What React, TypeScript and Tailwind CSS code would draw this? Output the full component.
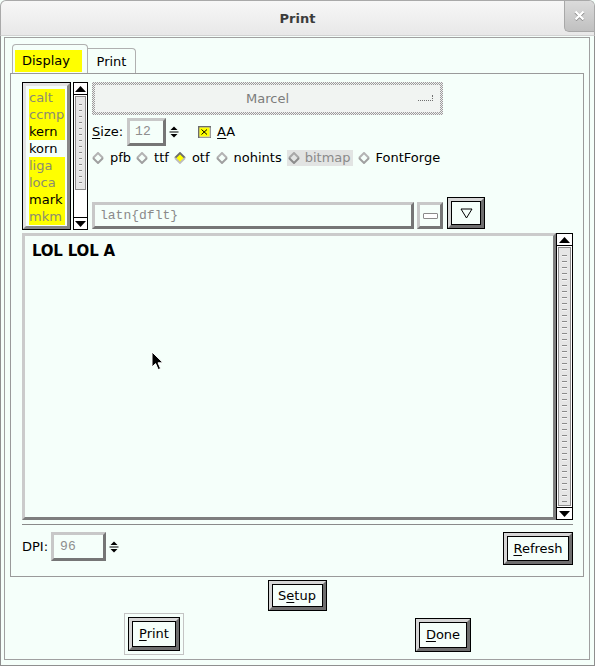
import React from "react";

function Btn({ className, children }: { className: string; children: React.ReactNode }) {
  return (
    <div className={`border border-black bg-[#f5fffa] ${className}`}>
      <div className="h-full w-full border-[3px] border-t-[#d6d6d6] border-l-[#d6d6d6] border-r-[#6e6e6e] border-b-[#6e6e6e]">
        <div className="h-full w-full border border-black flex items-center justify-center text-[13px] text-black">
          {children}
        </div>
      </div>
    </div>
  );
}

function Spinner() {
  return (
    <svg width="10" height="12" viewBox="0 0 10 12">
      <path d="M1.5 4 L5 0.5 L8.5 4 Z" fill="#000" />
      <rect x="0.5" y="5.5" width="9" height="1" fill="#000" />
      <path d="M1.5 8 L5 11.5 L8.5 8 Z" fill="#000" />
    </svg>
  );
}

function Diamond({ checked, faint }: { checked?: boolean; faint?: boolean }) {
  if (checked) {
    return (
      <svg width="12" height="12" viewBox="0 0 12 12" className="shrink-0">
        <polygon points="6,1 11,6 6,11 1,6" fill="#ffff00" />
        <polyline points="1,6 6,1 11,6" fill="none" stroke="#6e6e6e" strokeWidth="1.8" />
        <polyline points="1,6 6,11 11,6" fill="none" stroke="#bdbdbd" strokeWidth="1.8" />
      </svg>
    );
  }
  return (
    <svg width="12" height="12" viewBox="0 0 12 12" className="shrink-0">
      <polyline points="1,6 6,1 11,6" fill="none" stroke={faint ? "#a8a8a8" : "#b4b4b4"} strokeWidth="2" />
      <polyline points="1,6 6,11 11,6" fill="none" stroke={faint ? "#8c8c8c" : "#a0a0a0"} strokeWidth="2" />
    </svg>
  );
}

function Radio({ label, checked, className }: { label: string; checked?: boolean; className?: string }) {
  return (
    <div className={`flex items-center ${className ?? ""}`}>
      <Diamond checked={checked} />
      <span className="ml-[6px]">{label}</span>
    </div>
  );
}

function VScroll({ className, thumbClass }: { className: string; thumbClass: string }) {
  return (
    <div className={`flex flex-col border border-black bg-white ${className}`}>
      <div className="h-[12px] shrink-0 flex items-center justify-center border-b border-black">
        <svg width="11" height="6" viewBox="0 0 11 6">
          <path d="M0 6 L5.5 0 L11 6 Z" fill="#000" />
        </svg>
      </div>
      <div className="flex-1 flex flex-col px-[1px] pt-[1px] min-h-0">
        <div className={`border border-[#8a8a8a] bg-[#e6e6e6] px-[3px] py-[3px] ${thumbClass}`}>
          <div className="h-full bg-[repeating-linear-gradient(to_bottom,transparent_0px,transparent_4px,#8a8a8a_4px,#8a8a8a_5px,#f4f4f4_5px,#f4f4f4_6px)]" />
        </div>
      </div>
      <div className="h-[12px] shrink-0 flex items-center justify-center border-t border-black">
        <svg width="11" height="6" viewBox="0 0 11 6">
          <path d="M0 0 L5.5 6 L11 0 Z" fill="#000" />
        </svg>
      </div>
    </div>
  );
}

const bevelIn =
  "border-[3px] border-t-[#c8c8c8] border-l-[#c8c8c8] border-r-[#767676] border-b-[#767676]";

const items: { t: string; y: boolean; g: boolean }[] = [
  { t: "calt", y: true, g: true },
  { t: "ccmp", y: true, g: true },
  { t: "kern", y: true, g: false },
  { t: "korn", y: false, g: false },
  { t: "liga", y: true, g: true },
  { t: "loca", y: true, g: true },
  { t: "mark", y: true, g: false },
  { t: "mkm", y: true, g: true },
];

export default function App() {
  return (
    <div className="w-[595px] h-[666px] overflow-hidden bg-[#f5fffa] font-['DejaVu_Sans',sans-serif] text-[13px] text-black flex flex-col">
      {/* Title bar */}
      <div className="h-[36px] shrink-0 flex bg-gradient-to-b from-[#f7f7f7] to-[#e8e8e8] border border-[#a9a9a9] border-b-[#d2d2d2] rounded-t-[6px] overflow-hidden">
        <div className="w-[30px]" />
        <div className="flex-1 flex items-center justify-center font-bold text-[13px] text-[#3c3c3c] pt-[2px]">Print</div>
        <div className="w-[30px] h-[32px] -mt-[1px] rounded-bl-[5px] border-l border-b border-[#a8a8a8] bg-gradient-to-b from-[#dcdcdc] to-[#c0c0c0] flex items-center justify-center">
          <svg width="11" height="11" viewBox="0 0 11 11">
            <path d="M1.5 1.5 L9.5 9.5 M9.5 1.5 L1.5 9.5" stroke="#8a8a8a" strokeWidth="3" transform="translate(0,0.6)" />
            <path d="M1.5 1.5 L9.5 9.5 M9.5 1.5 L1.5 9.5" stroke="#ffffff" strokeWidth="2.4" />
          </svg>
        </div>
      </div>

      {/* Body */}
      <div className="flex-1 border-x border-b border-[#8f8f8f] pt-[1px] pl-[3px] pr-[4px] pb-[5px]">
        <div className="h-full border border-[#a0a0a0] flex flex-col px-[5px] pt-[6px]">
          {/* Tabs */}
          <div className="h-[29px] shrink-0 flex items-end pl-[2px]">
            <div className="w-[76px] h-[29px] border-t border-l border-r border-[#b0b0b0] rounded-t-[4px] pt-[5px] pl-[2px]">
              <div className="w-[67px] h-[22px] bg-[#ffff00] flex items-center pl-[7px]">Display</div>
            </div>
            <div className="w-[48px] h-[25px] border-t border-r border-[#b0b0b0] rounded-tr-[4px] flex items-center justify-center pt-[1px]">
              Print
            </div>
          </div>

          {/* Panel */}
          <div className="h-[504px] shrink-0 border border-[#9a9a9a] pt-[8px] pl-[11px] pr-[10px] flex flex-col">
            {/* Top section */}
            <div className="h-[148px] shrink-0 flex">
              {/* Feature list */}
              <div className="w-[49px] h-full border border-black">
                <div className="h-full border-[3px] border-t-[#e4e4e4] border-l-[#e4e4e4] border-r-[#878787] border-b-[#878787] pt-[3px] pl-[3px] pr-[2px] overflow-hidden">
                  {items.map((it) => (
                    <div
                      key={it.t}
                      className={`h-[17px] leading-[17px] whitespace-nowrap ${it.y ? "bg-[#ffff00]" : ""} ${
                        it.g ? "text-[#8c8c70]" : "text-black"
                      }`}
                    >
                      {it.t}
                    </div>
                  ))}
                </div>
              </div>
              <VScroll className="ml-[2px] w-[15px] h-full" thumbClass="h-[94px]" />

              {/* Right column */}
              <div className="ml-[4px] w-[393px] flex flex-col pb-[1px]">
                <div className="w-[351px] h-[33px] p-[3px] bg-[repeating-conic-gradient(#9c9c9c_0%_25%,#f0f0f0_0%_50%)] bg-[length:2px_2px]">
                  <div className="h-full bg-[#f1f4f2] relative flex items-center justify-center text-[#7c7c7c]">
                    Marcel
                    <div className="absolute right-[7px] top-[10px] w-[15px] h-[6px] border-b border-r border-dotted border-[#6f6f6f]" />
                  </div>
                </div>

                <div className="mt-[3px] h-[28px] flex items-center">
                  <span>
                    <span className="underline underline-offset-2">S</span>ize:
                  </span>
                  <div className={`ml-[4px] w-[39px] h-[28px] ${bevelIn} flex items-center pl-[5px] font-['Liberation_Mono',monospace] text-[13px] text-[#8e8e8e]`}>
                    12
                  </div>
                  <div className="ml-[3px] flex items-center">
                    <Spinner />
                  </div>
                  <svg width="13" height="12" viewBox="0 0 13 12" className="ml-[19px]">
                    <rect x="0" y="0" width="13" height="12" fill="#6c6c6c" />
                    <rect x="1.5" y="1.5" width="11" height="10" fill="#c8c8c8" />
                    <rect x="1.5" y="1.5" width="10" height="9" fill="#ffff00" />
                    <path d="M3.5 3.5 L9 8.5 M9 3.5 L3.5 8.5" stroke="#000" strokeWidth="1" />
                  </svg>
                  <span className="ml-[6px]">
                    <span className="underline underline-offset-2">A</span>A
                  </span>
                </div>

                <div className="mt-[4px] h-[16px] flex items-center">
                  <Radio label="pfb" />
                  <Radio label="ttf" className="ml-[5px]" />
                  <Radio label="otf" checked className="ml-[5px]" />
                  <Radio label="nohints" className="ml-[6px]" />
                  <div className="ml-[5px] h-[16px] bg-[#e2e4e3] flex items-center pl-[1px] pr-[2px] text-[#8a8a8a]">
                    <Diamond faint />
                    <span className="ml-[5px]">bitmap</span>
                  </div>
                  <Radio label="FontForge" className="ml-[5px]" />
                </div>

                <div className="mt-auto flex items-end">
                  <div className={`w-[322px] h-[27px] ${bevelIn} flex items-center pl-[5px] font-['Liberation_Mono',monospace] text-[13px] text-[#8a8a8a]`}>
                    latn{"{"}dflt{"}"}
                  </div>
                  <div className={`ml-[3px] w-[26px] h-[27px] ${bevelIn} flex items-center justify-center`}>
                    <div className="w-[15px] h-[6px] border border-[#8a8a8a] rounded-[1px] bg-white" />
                  </div>
                  <Btn className="ml-[4px] w-[38px] h-[32px]">
                    <svg width="13" height="11" viewBox="0 0 13 11">
                      <polygon points="1,1 12,1 6.5,10" fill="none" stroke="#000" strokeWidth="1" />
                    </svg>
                  </Btn>
                </div>
              </div>
            </div>

            {/* Text area */}
            <div className="mt-[3px] h-[287px] shrink-0 flex">
              <div className="flex-1 border-[3px] border-t-[#cbcbcb] border-l-[#cbcbcb] border-r-[#7e7e7e] border-b-[#7e7e7e] relative pl-[7px] pt-[6px]">
                <div className="font-bold text-[15px] leading-[18px] tracking-[-0.2px]">LOL LOL A</div>
                <svg width="14" height="21" viewBox="0 0 14 21" className="absolute left-[126px] top-[115px]">
                  <path d="M1 1 L1 16 L4.6 12.6 L7.2 18.6 L9.6 17.6 L7 11.8 L12 11.8 Z" fill="#000" stroke="#fff" strokeWidth="1" strokeLinejoin="round" />
                </svg>
              </div>
              <VScroll className="w-[17px] h-full" thumbClass="flex-1 mb-[1px]" />
            </div>

            {/* Separator */}
            <div className="mt-[4px] h-[1px] shrink-0 bg-[#8a8a8a]" />

            {/* DPI row */}
            <div className="mt-[7px] h-[33px] shrink-0 flex items-start">
              <span className="h-[29px] flex items-center">DPI:</span>
              <div className={`ml-[3px] w-[55px] h-[29px] ${bevelIn} flex items-center pl-[6px] font-['Liberation_Mono',monospace] text-[13px] text-[#8e8e8e]`}>
                96
              </div>
              <div className="ml-[3px] h-[29px] flex items-center">
                <Spinner />
              </div>
              <Btn className="ml-auto w-[70px] h-[33px]">
                <span>
                  <span className="underline underline-offset-2">R</span>efresh
                </span>
              </Btn>
            </div>
          </div>

          {/* Setup */}
          <div className="mt-[3px] flex justify-center">
            <Btn className="w-[59px] h-[31px]">
              <span>
                S<span className="underline underline-offset-2">e</span>tup
              </span>
            </Btn>
          </div>

          {/* Print / Done */}
          <div className="mt-[2px] h-[42px] flex justify-between pl-[114px] pr-[113px]">
            <div className="w-[60px] h-[42px] border border-[#c4c4c4] p-[3px]">
              <Btn className="w-[52px] h-[34px]">
                <span>
                  <span className="underline underline-offset-2">P</span>rint
                </span>
              </Btn>
            </div>
            <Btn className="mt-[5px] w-[56px] h-[34px]">
              <span>
                <span className="underline underline-offset-2">D</span>one
              </span>
            </Btn>
          </div>
        </div>
      </div>
    </div>
  );
}
